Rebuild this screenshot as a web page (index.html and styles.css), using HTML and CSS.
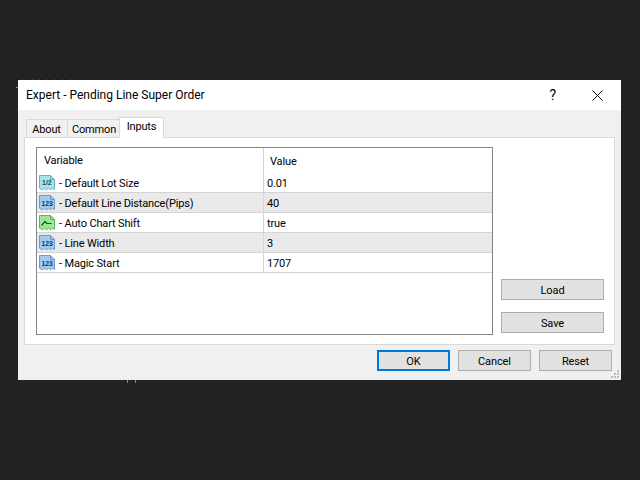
FILE: index.html
```html
<!DOCTYPE html>
<html lang="en">
<head>
<meta charset="utf-8">
<title>Expert - Pending Line Super Order</title>
<link rel="stylesheet" href="styles.css">
</head>
<body>
<svg class="defs" width="0" height="0" aria-hidden="true">
  <symbol id="sheet" viewBox="0 0 16 16">
    <path d="M.5.5H11.5L15.5 4.5V14.5L13.5 13.2 11.5 14.8 9.5 13.2 7.5 14.8 5.5 13.2 3.5 14.8 .5 13.2Z"/>
    <path class="fold" d="M11.5.5V4.5H15.5Z"/>
  </symbol>
</svg>
<svg class="chart-marks" width="640" height="480" aria-hidden="true">
  <path class="marks-dim" d="M23.5 79v1M32.5 79v1M39.5 79v1M47.5 79v1M55.5 79v1M63.5 79v1M71.5 79v1"/>
  <path class="marks-green" d="M16 87.5h2M127.5 380v3M135.5 380v3"/>
</svg>
<main class="window">
  <header class="titlebar">
    <h1 class="title">Expert - Pending Line Super Order</h1>
    <span class="help">?</span>
    <svg class="close" width="11" height="11" viewBox="0 0 11 11"><path d="M.5.5 10.5 10.5M10.5.5.5 10.5"/></svg>
  </header>
  <div class="body">
    <nav class="tabs">
      <span class="tab tab-about">About</span>
      <span class="tab tab-common">Common</span>
      <span class="tab tab-active">Inputs</span>
    </nav>
    <section class="panel">
      <div class="list">
        <div class="row head"><span class="col-var head-var">Variable</span><span class="col-val head-val">Value</span></div>
        <div class="row">
          <span class="col-var"><svg class="ico ico-frac" width="16" height="16"><use href="#sheet"/><text x="3" y="10">1/2</text></svg><span class="label">- Default Lot Size</span></span><span class="col-val">0.01</span>
        </div>
        <div class="row alt">
          <span class="col-var"><svg class="ico ico-num" width="16" height="16"><use href="#sheet"/><text x="2.5" y="11">123</text></svg><span class="label">- Default Line Distance(Pips)</span></span><span class="col-val">40</span>
        </div>
        <div class="row">
          <span class="col-var"><svg class="ico ico-bool" width="16" height="16"><use href="#sheet"/><path class="mark" d="M2.5 10.5 6 6.5 8 8.5H12.5"/></svg><span class="label">- Auto Chart Shift</span></span><span class="col-val">true</span>
        </div>
        <div class="row alt">
          <span class="col-var"><svg class="ico ico-num" width="16" height="16"><use href="#sheet"/><text x="2.5" y="11">123</text></svg><span class="label">- Line Width</span></span><span class="col-val">3</span>
        </div>
        <div class="row">
          <span class="col-var"><svg class="ico ico-num" width="16" height="16"><use href="#sheet"/><text x="2.5" y="11">123</text></svg><span class="label">- Magic Start</span></span><span class="col-val">1707</span>
        </div>
      </div>
      <div class="side">
        <button class="btn side-btn">Load</button>
        <button class="btn side-btn">Save</button>
      </div>
    </section>
    <footer class="actions">
      <button class="btn act-btn default">OK</button>
      <button class="btn act-btn">Cancel</button>
      <button class="btn act-btn">Reset</button>
    </footer>
    <svg class="grip" width="10" height="10" viewBox="0 0 10 10"><path d="M6 0h2v2H6zM3 3h2v2H3zM6 3h2v2H6zM0 6h2v2H0zM3 6h2v2H3zM6 6h2v2H6z"/></svg>
  </div>
</main>
</body>
</html>
```
FILE: styles.css
```css
* { box-sizing: border-box; }
html, body { margin: 0; height: 100%; }
body {
  background: #222222;
  font: 11px/16px Roboto, "Open Sans", sans-serif;
  letter-spacing: -0.15px;
  color: #000;
  padding: 80px 0 0 18px;
  overflow: hidden;
}
.defs { position: absolute; }
.chart-marks { position: absolute; left: 0; top: 0; }
.marks-dim { stroke: #3a463a; stroke-width: 1; fill: none; }
.marks-green { stroke: #2fc82f; stroke-width: 1; fill: none; }
.window { position: relative; width: 603px; height: 300px; background: #f0f0f0; display: flex; flex-direction: column; }
.titlebar { height: 30px; background: #fff; display: flex; align-items: center; padding: 0 18px 0 8px; }
.title { margin: 0; font-size: 12px; font-weight: 400; letter-spacing: 0; flex: 1; }
.help { margin-right: 36px; font-size: 14px; letter-spacing: 0; }
.close { display: block; }
.close path { stroke: #111; stroke-width: 1; fill: none; }
.body { position: relative; flex: 1; padding: 7px 6px 0; display: flex; flex-direction: column; }
.tabs { display: flex; height: 20px; align-items: flex-end; position: relative; z-index: 1; padding-left: 2px; }
.tab { background: #f0f0f0; border: 1px solid #d9d9d9; border-bottom: 0; height: 18px; font-size: 11px; line-height: 19px; text-align: center; margin-right: -1px; }
.tab-about { width: 42px; padding-right: 1px; }
.tab-common { width: 53px; padding-left: 1px; }
.tab-active { width: 45px; height: 21px; background: #fff; line-height: 17px; margin-bottom: -1px; position: relative; }
.panel { height: 208px; background: #fff; border: 1px solid #d9d9d9; padding: 9px 10px 9px 11px; display: flex; gap: 8px; }
.list { width: 457px; border: 1px solid #82828c; background: #fff; }
.row { display: flex; height: 20px; border-bottom: 1px solid #d4d4d4; font-size: 11px; line-height: 21px; }
.row.head { height: 25px; border-bottom: 0; line-height: 27px; }
.row.alt { background: #e9e9e9; }
.col-var { width: 227px; border-right: 1px solid #d4d4d4; display: flex; align-items: center; gap: 4px; padding-left: 2px; white-space: nowrap; }
.col-val { flex: 1; padding-left: 3px; }
.head-var { padding-left: 7px; }
.head-val { padding-left: 6px; }
.label { padding-top: 1px; }
.ico { flex: none; display: block; }
.ico text { font: 700 6.8px/1 "Liberation Sans", sans-serif; letter-spacing: 0; stroke: none; fill: #14365c; }
.ico-num { fill: #a3cbf0; stroke: #6f9cc4; }
.ico-frac { fill: #a9e3ea; stroke: #63b3c2; }
.ico-bool { fill: #9ee79a; stroke: #57b860; }
.ico .fold { fill: #e8f2fa; }
.ico-frac text { font-size: 7px; fill: #17505e; }
.ico .mark { fill: none; stroke: #0c5a12; stroke-width: 1.2; }
.side { flex: 1; display: flex; flex-direction: column; justify-content: flex-end; gap: 12px; padding-bottom: 2px; }
.btn { display: block; background: #e1e1e1; border: 1px solid #adadad; padding: 2px 0 0; font: 11px/16px Roboto, "Open Sans", sans-serif; letter-spacing: -0.1px; color: #000; }
.side-btn { width: 103px; height: 21px; }
.actions { display: flex; justify-content: flex-end; gap: 8px; padding: 5px 3px 0 0; }
.act-btn { width: 73px; height: 21px; }
.default { border: 2px solid #0078d7; }
.grip { position: absolute; right: 0; bottom: 0; }
.grip path { fill: #bdbdbd; }
```
